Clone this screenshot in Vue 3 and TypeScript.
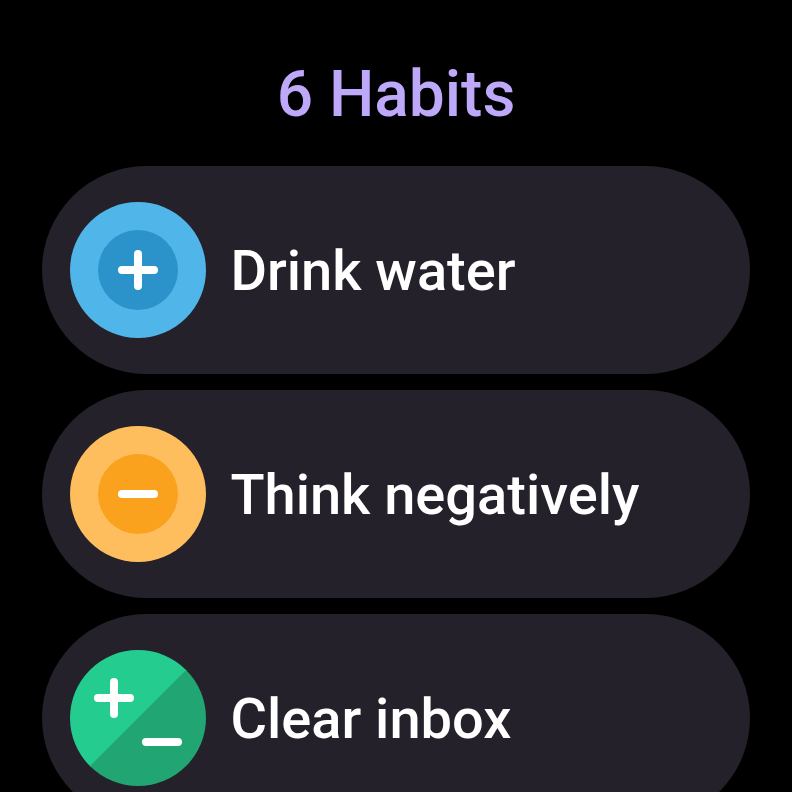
<script setup lang="ts">
type HabitKind = 'positive' | 'negative' | 'both'

interface Habit {
  title: string
  kind: HabitKind
}

const habits: Habit[] = [
  { title: 'Drink water', kind: 'positive' },
  { title: 'Think negatively', kind: 'negative' },
  { title: 'Clear inbox', kind: 'both' },
]
const total = 6
</script>

<template>
  <main class="screen">
    <h1 class="heading">{{ total }} Habits</h1>
    <ul class="list">
      <li v-for="habit in habits" :key="habit.title" class="chip">
        <svg class="icon" viewBox="0 0 136 136" aria-hidden="true">
          <template v-if="habit.kind === 'both'">
            <g transform="rotate(-45 68 68)">
              <path d="M0 68A68 68 0 0 1 136 68V69H0Z" fill="#24cc8f" />
              <path d="M0 68A68 68 0 0 0 136 68Z" fill="#20a573" />
            </g>
            <path class="stroke" d="M28 48H60M44 32V64M76 92H108" />
          </template>
          <template v-else>
            <circle cx="68" cy="68" r="68" :fill="habit.kind === 'positive' ? '#50b5e9' : '#ffbe5d'" />
            <circle cx="68" cy="68" r="40" :fill="habit.kind === 'positive' ? '#2b93ca' : '#faa11e'" />
            <path class="stroke" :d="habit.kind === 'positive' ? 'M52 68H84M68 52V84' : 'M52 68H84'" />
          </template>
        </svg>
        <span class="title">{{ habit.title }}</span>
      </li>
    </ul>
  </main>
</template>

<style>
body {
  margin: 0;
  background: #000;
}
</style>

<style scoped>
.screen {
  box-sizing: border-box;
  height: 792px;
  overflow: hidden;
  padding: 57px 42px 0;
  background: #000;
  font-family: Roboto, sans-serif;
  font-weight: 500;
}
.heading {
  margin: 0 0 33px;
  font-size: 64px;
  font-weight: 500;
  line-height: 76px;
  text-align: center;
  color: #bda8f9;
}
.list {
  display: flex;
  flex-direction: column;
  gap: 16px;
  margin: 0;
  padding: 0;
  list-style: none;
}
.chip {
  box-sizing: border-box;
  flex: none;
  display: flex;
  align-items: center;
  gap: 24.4px;
  height: 208px;
  padding: 0 28px;
  border-radius: 104px;
  background: #24212a;
}
.icon {
  flex: none;
  width: 136px;
  height: 136px;
}
.stroke {
  fill: none;
  stroke: #fff;
  stroke-width: 8;
  stroke-linecap: round;
}
.title {
  padding-top: 2px;
  font-size: 56px;
  line-height: 66px;
  white-space: nowrap;
  color: #fff;
}
</style>
